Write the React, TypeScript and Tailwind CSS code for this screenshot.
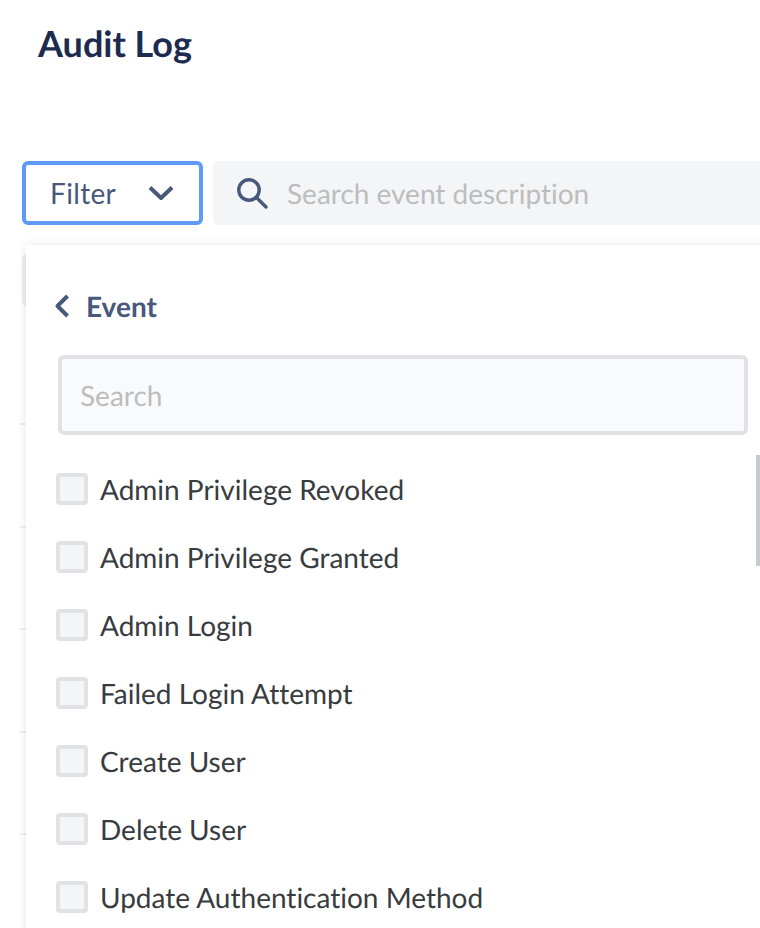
const events = [
  "Admin Privilege Revoked",
  "Admin Privilege Granted",
  "Admin Login",
  "Failed Login Attempt",
  "Create User",
  "Delete User",
  "Update Authentication Method",
];

export default function App() {
  return (
    <div className="h-[928px] w-[760px] overflow-hidden bg-white font-['Lato',sans-serif] [font-variant-ligatures:none] [text-rendering:geometricPrecision]">
      <h1 className="ml-[38px] pt-[21px] text-[36px] leading-[44px] font-bold text-[#1c2b4f]">Audit Log</h1>

      {/* Toolbar */}
      <div className="mt-[96px] ml-[22px] flex gap-[10px]">
        <button className="flex h-[64px] w-[181px] items-center justify-between rounded-[6px] border-4 border-[#5f9bf6] pr-[25px] pl-[25px] text-[28px] text-[#47587a]">
          <span className="-ml-px tracking-[0.35px]">Filter</span>
          <svg className="h-[16px] w-[26px]" viewBox="0 0 26 16" fill="none" stroke="currentColor" strokeWidth="4" strokeLinejoin="round">
            <path d="M2 2.5 L13 13 L24 2.5" />
          </svg>
        </button>
        <div className="flex h-[64px] flex-1 items-center rounded-l-[6px] bg-[#f4f5f6] pl-[23px]">
          <svg className="h-[32px] w-[32px] text-[#47587a]" viewBox="0 0 32 32" fill="none" stroke="currentColor" strokeWidth="3.4">
            <circle cx="13" cy="13" r="10.2" />
            <path d="M20.5 20.5 L30 30" strokeLinecap="round" />
          </svg>
          <span className="ml-[19px] text-[28px] text-[#bcbdbe]">Search event description</span>
        </div>
      </div>

      <div className="relative mt-[20px] ml-[20px] pt-[8px]">
        {/* Table behind the menu */}
        <div className="ml-[2px] h-[54px] w-[20px] rounded-l-[6px] bg-[#eceef0]" />
        <div className="mt-[116px] flex flex-col gap-[100.5px]">
          <div className="h-[2px] w-[20px] bg-[#eceef0]" />
          <div className="h-[2px] w-[20px] bg-[#eceef0]" />
          <div className="h-[2px] w-[20px] bg-[#eceef0]" />
          <div className="h-[2px] w-[20px] bg-[#eceef0]" />
          <div className="h-[2px] w-[20px] bg-[#eceef0]" />
        </div>

        {/* Event filter menu */}
        <div className="absolute top-0 left-[6px] h-[700px] w-[760px] bg-white pt-[43px] shadow-[0_0_10px_rgba(30,40,60,0.1)]">
          <div className="flex h-[36px] items-center pl-[28px] text-[#47587a]">
            <svg className="h-[24px] w-[16px]" viewBox="0 0 16 24" fill="none" stroke="currentColor" strokeWidth="4" strokeLinejoin="round">
              <path d="M13.5 2 L3.5 12 L13.5 22" />
            </svg>
            <span className="ml-[16px] text-[28px] font-bold">Event</span>
          </div>
          <div className="mt-[31px] ml-[32px] flex h-[80px] w-[690px] items-center rounded-[6px] border-4 border-[#e0e2e6] bg-[#f9fafb] pl-[18px] text-[28px] text-[#bcbdbe]">
            Search
          </div>
          <div className="relative mt-[20px]">
            <div className="absolute top-0 right-[26px] h-[111px] w-[4px] bg-[#c5cad1]" />
            <ul className="flex flex-col pl-[30px]">
              {events.map((name) => (
                <li key={name} className="flex h-[68px] items-center gap-[12px] text-[28px] text-[#383c40]">
                  <span className="h-[32px] w-[32px] rounded-[4px] border-4 border-[#e0e2e6] bg-[#f4f5f7]" />
                  {name}
                </li>
              ))}
            </ul>
          </div>
        </div>
      </div>
    </div>
  );
}
